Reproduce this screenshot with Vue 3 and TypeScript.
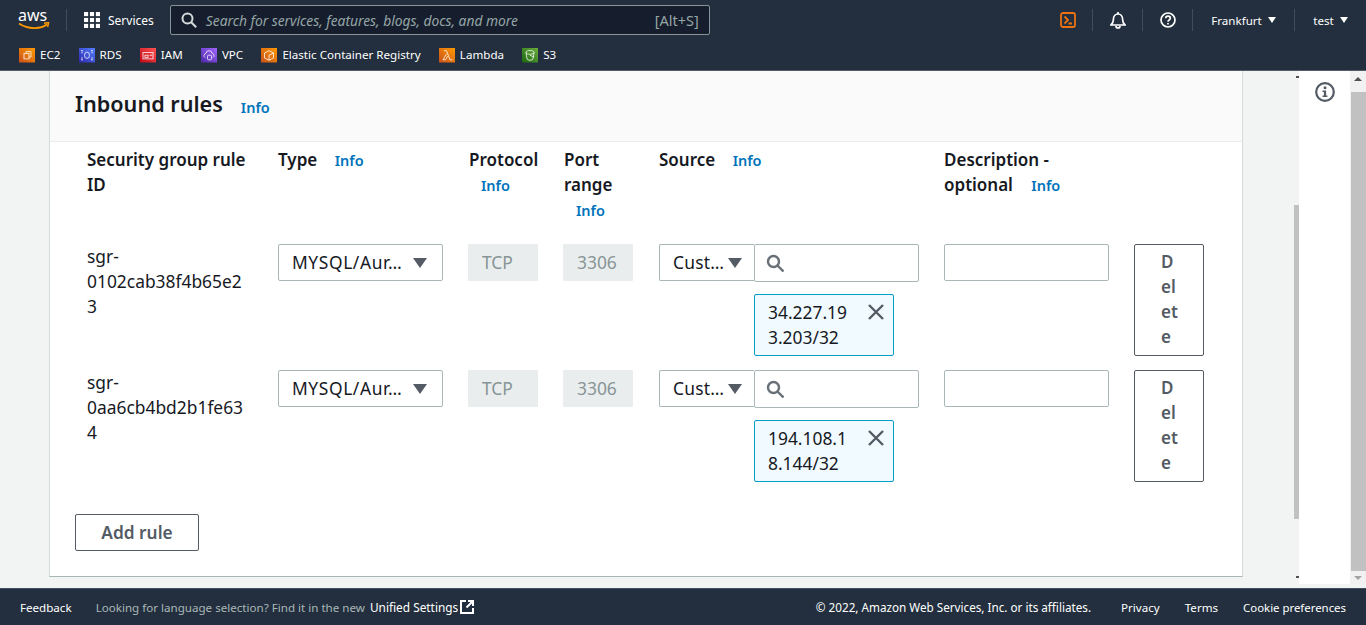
<script setup lang="ts">
interface Rule {
  id: string[]
  cidr: string[]
}

const services = [
  { name: 'EC2', from: '#c8511b', to: '#ff9900', kind: 'ec2' },
  { name: 'RDS', from: '#2e27ad', to: '#527fff', kind: 'rds' },
  { name: 'IAM', from: '#bd0816', to: '#ff5252', kind: 'iam' },
  { name: 'VPC', from: '#4d27a8', to: '#a166ff', kind: 'vpc' },
  { name: 'Elastic Container Registry', from: '#c8511b', to: '#ff9900', kind: 'ecr' },
  { name: 'Lambda', from: '#c8511b', to: '#ff9900', kind: 'lambda' },
  { name: 'S3', from: '#1b660f', to: '#6cae3e', kind: 's3' },
]

const rules: Rule[] = [
  { id: ['sgr-', '0102cab38f4b65e2', '3'], cidr: ['34.227.19', '3.203/32'] },
  { id: ['sgr-', '0aa6cb4bd2b1fe63', '4'], cidr: ['194.108.1', '8.144/32'] },
]
</script>

<template>
  <div class="page">
    <header class="nav">
      <div class="nav-top">
        <div class="logo">
          <span class="logo-text">aws</span>
          <svg viewBox="0 0 33 9" width="33" height="9">
            <path d="M1 1.500c9 6 22 6 28 .8" fill="none" stroke="#f90" stroke-width="1.800" />
            <path d="M26 1.200l4.600-.6-1 4.400" fill="none" stroke="#f90" stroke-width="1.500" />
          </svg>
        </div>
        <span class="nav-sep logo-sep"></span>
        <svg class="grid-icon" viewBox="0 0 17 17" width="16" height="16" fill="#fff">
          <rect x="0" y="0" width="4.400" height="4.400" /><rect x="6.300" y="0" width="4.400" height="4.400" /><rect x="12.600" y="0" width="4.400" height="4.400" />
          <rect x="0" y="6.300" width="4.400" height="4.400" /><rect x="6.300" y="6.300" width="4.400" height="4.400" /><rect x="12.600" y="6.300" width="4.400" height="4.400" />
          <rect x="0" y="12.600" width="4.400" height="4.400" /><rect x="6.300" y="12.600" width="4.400" height="4.400" /><rect x="12.600" y="12.600" width="4.400" height="4.400" />
        </svg>
        <span class="services-label">Services</span>
        <div class="search">
          <svg viewBox="0 0 16 16" width="16" height="16" fill="none" stroke="#d5dbdb" stroke-width="2">
            <circle cx="6.500" cy="6.500" r="5" /><path d="M10.200 10.200l5 5" />
          </svg>
          <span class="search-text">Search for services, features, blogs, docs, and more</span>
          <span class="search-key">[Alt+S]</span>
        </div>
        <div class="nav-right">
          <span class="nav-item shell">
            <svg viewBox="0 0 16 16" width="16" height="16" fill="none" stroke="#ec7211" stroke-width="1.800">
              <rect x="1" y="1" width="14" height="14" rx="2" /><path d="M4.500 4.500L8 8l-3.500 3.500M8.500 11.500h3.500" />
            </svg>
          </span>
          <span class="nav-sep"></span>
          <span class="nav-item bell">
            <svg viewBox="0 0 16 17" width="16" height="17" fill="none" stroke="#fff" stroke-width="1.700">
              <path d="M1 13h14c-1.600-1.400-2.400-3-2.400-5.500 0-3-1.900-5.500-4.600-5.500S3.400 4.500 3.400 7.500C3.400 10 2.600 11.600 1 13z" />
              <path d="M6 14a2 2 0 0 0 4 0" /><path d="M8 0v2" />
            </svg>
          </span>
          <span class="nav-sep"></span>
          <span class="nav-item help">
            <svg viewBox="0 0 16 16" width="16" height="16" fill="none" stroke="#fff" stroke-width="1.700">
              <circle cx="8" cy="8" r="7" /><path d="M5.700 6.200C5.800 4.900 6.800 4.200 8 4.200c1.300 0 2.300.8 2.300 2 0 1.900-2.300 1.700-2.300 3.500" />
              <path d="M8 11v1.500" />
            </svg>
          </span>
          <span class="nav-sep"></span>
          <span class="nav-item region">Frankfurt <i class="caret"></i></span>
          <span class="nav-sep"></span>
          <span class="nav-item user">test <i class="caret"></i></span>
        </div>
      </div>
      <div class="nav-bottom">
        <span v-for="s in services" :key="s.name" class="service">
          <svg class="service-icon" viewBox="0 0 16 16" width="16" height="14.500" preserveAspectRatio="none">
            <defs>
              <linearGradient :id="`grad-${s.kind}`" x1="0" y1="1" x2="1" y2="0">
                <stop offset="0" :stop-color="s.from" />
                <stop offset="1" :stop-color="s.to" />
              </linearGradient>
            </defs>
            <rect width="16" height="16" :fill="`url(#grad-${s.kind})`" />
            <g fill="none" stroke="#fff" stroke-width="1" opacity="0.8">
              <template v-if="s.kind === 'ec2'">
                <rect x="5" y="6" width="5" height="6" /><path d="M7 6V4h5v6h-2" />
              </template>
              <template v-else-if="s.kind === 'rds'">
                <ellipse cx="8" cy="8" rx="2.500" ry="3.500" /><path d="M3 4v2M3 10v2M13 4v2M13 10v2M2 3h2M12 3h2M2 13h2M12 13h2" />
              </template>
              <template v-else-if="s.kind === 'iam'">
                <rect x="3" y="5" width="10" height="7" /><rect x="5" y="8" width="3" height="2.500" /><path d="M9.500 8H12" />
              </template>
              <template v-else-if="s.kind === 'vpc'">
                <path d="M4 10.500a2.500 2.500 0 0 1 1-4.500 3 3 0 0 1 6 0 2.500 2.500 0 0 1 1 4.500" /><rect x="6.500" y="8" width="4" height="5" rx="1" />
              </template>
              <template v-else-if="s.kind === 'ecr'">
                <path d="M8 3l4.500 2.500v5.500L8 13.500 3.500 11V5.500zM8 8v5.500M8 8l4.500-2.500" />
              </template>
              <template v-else-if="s.kind === 'lambda'">
                <path d="M5 3h2.500l3.500 10h2.500M7.500 6.500L4 13h2.500l2.300-4" />
              </template>
              <template v-else>
                <path d="M4 5c0-3 8-3 8 0l-1 7c-.4 2-5.600 2-6 0zM4 5c0 2.500 8 2.500 8 0M8 8l4 2" />
              </template>
            </g>
          </svg>
          {{ s.name }}
        </span>
      </div>
    </header>

    <div class="body">
      <main class="main">
        <section class="card">
          <div class="card-head">
            <h2>Inbound rules</h2>
            <a class="info head-info">Info</a>
          </div>
          <div class="card-body">
            <div class="rule-grid heads">
              <div class="head">Security group rule ID</div>
              <div class="head">Type <a class="info inline">Info</a></div>
              <div class="head nudge">Protocol <a class="info block">Info</a></div>
              <div class="head nudge">Port range <a class="info block">Info</a></div>
              <div class="head">Source <a class="info inline">Info</a></div>
              <div class="head">
                <div>Description -</div>
                <div><span>optional</span> <a class="info inline wide">Info</a></div>
              </div>
              <div></div>
            </div>
            <div v-for="rule in rules" :key="rule.id[1]" class="rule-grid row">
              <div class="rule-id">
                <div v-for="line in rule.id" :key="line">{{ line }}</div>
              </div>
              <div class="select">
                <span class="select-text">MYSQL/Aur…</span>
                <i class="select-caret"></i>
              </div>
              <div class="readonly">TCP</div>
              <div class="readonly">3306</div>
              <div class="source">
                <div class="source-top">
                  <div class="select small">
                    <span class="select-text">Cust…</span>
                    <i class="select-caret"></i>
                  </div>
                  <div class="source-search">
                    <svg viewBox="0 0 18 18" width="18" height="18" fill="none" stroke="#687078" stroke-width="2.400">
                      <circle cx="7.500" cy="7.500" r="5.500" /><path d="M11.500 11.500l6 6" />
                    </svg>
                  </div>
                </div>
                <div class="token">
                  <div class="token-text">
                    <div v-for="line in rule.cidr" :key="line">{{ line }}</div>
                  </div>
                  <svg class="token-x" viewBox="0 0 16 16" width="16" height="16" stroke="#545b64" stroke-width="2.400">
                    <path d="M1 1l14 14M15 1L1 15" />
                  </svg>
                </div>
              </div>
              <div class="desc"></div>
              <button class="delete">Delete</button>
            </div>
            <button class="add-rule">Add rule</button>
          </div>
        </section>
        <div class="inner-scroll">
          <i class="tiny up"></i>
          <div class="inner-thumb"></div>
          <i class="tiny down"></i>
        </div>
      </main>
      <aside class="panel">
        <svg viewBox="0 0 20 20" width="20" height="20">
          <circle cx="10" cy="10" r="8.800" fill="none" stroke="#545b64" stroke-width="2.200" />
          <circle cx="10" cy="5.800" r="1.500" fill="#545b64" />
          <path d="M7.500 8.500h3.600v5h1.300v1.500H7.600v-1.500h1.300V10H7.500z" fill="#545b64" />
        </svg>
      </aside>
      <div class="outer-scroll">
        <i class="arrow up"></i>
        <div class="outer-thumb"></div>
        <i class="arrow down"></i>
      </div>
    </div>

    <footer class="footer">
      <span class="foot-link">Feedback</span>
      <span class="foot-muted">Looking for language selection? Find it in the new</span>
      <span class="foot-link unified">Unified Settings</span>
      <svg class="ext" viewBox="0 0 14 14" width="14" height="14" fill="none" stroke="#fff" stroke-width="2">
        <path d="M6 1H1v12h12V8" /><path d="M6.500 7.500L13 1M8 1h5v5" />
      </svg>
      <div class="foot-right">
        <span class="copy">© 2022, Amazon Web Services, Inc. or its affiliates.</span>
        <span class="foot-link">Privacy</span>
        <span class="foot-link">Terms</span>
        <span class="foot-link cookie">Cookie preferences</span>
      </div>
    </footer>
  </div>
</template>

<style>
html,
body {
  margin: 0;
  overflow: hidden;
}
</style>

<style scoped>
.page {
  display: flex;
  flex-direction: column;
  width: 1366px;
  height: 625px;
  overflow: hidden;
  font-family: "Noto Sans", "Open Sans", sans-serif;
  color: #16191f;
  background: #f2f3f3;
}

.nav {
  flex: none;
  height: 71px;
  box-sizing: border-box;
  background: #232f3e;
  color: #fff;
  border-bottom: 1px solid #545b64;
}

.nav-top {
  display: flex;
  align-items: center;
  height: 40px;
  padding-left: 18px;
}

.logo {
  display: flex;
  flex-direction: column;
  flex: none;
  width: 36px;
  margin-top: -1px;
}

.logo-text {
  font-size: 16px;
  line-height: 14px;
}

.logo svg {
  display: block;
}

.nav-sep {
  width: 1px;
  height: 22px;
  background: #414d5c;
  flex: none;
}

.logo-sep {
  margin: 0 17px 0 12px;
}

.services-label {
  margin: 0 16px 0 8px;
  font-size: 12px;
  white-space: nowrap;
}

.search {
  display: flex;
  align-items: center;
  width: 540px;
  height: 30px;
  box-sizing: border-box;
  padding: 0 10px;
  background: #161e2d;
  border: 1px solid #879596;
  border-radius: 2px;
  flex: none;
}

.search-text {
  margin-left: 9px;
  flex: 1;
  font-size: 13.800px;
  font-style: italic;
  color: #95a5a6;
  white-space: nowrap;
}

.search-key {
  font-size: 14.500px;
  color: #95a5a6;
}

.nav-right {
  display: flex;
  align-items: center;
  margin-left: auto;
  font-size: 11.600px;
}

.nav-item {
  display: flex;
  align-items: center;
  justify-content: center;
  white-space: nowrap;
}

.shell,
.bell,
.help {
  width: 49px;
}

.region {
  width: 101px;
}

.user {
  width: 71px;
}

.caret {
  display: inline-block;
  margin-left: 6px;
  border: 4px solid transparent;
  border-top: 6px solid #fff;
  border-bottom: 0;
}

.nav-bottom {
  display: flex;
  align-items: center;
  height: 29px;
  padding-left: 19px;
  gap: 18.200px;
  font-size: 11.600px;
}

.service {
  display: flex;
  align-items: center;
  gap: 5px;
  white-space: nowrap;
}

.service-icon {
  flex: none;
  margin-top: 2px;
}

.body {
  display: flex;
  flex: 1;
  min-height: 0;
  padding-bottom: 4px;
  box-sizing: border-box;
}

.main {
  position: relative;
  flex: 1;
  min-width: 0;
  padding-left: 49px;
  box-sizing: border-box;
}

.card {
  width: 1194px;
  height: 506px;
  box-sizing: border-box;
  background: #fff;
  border-left: 1px solid #d5dbdb;
  border-right: 1px solid #d5dbdb;
  border-bottom: 1px solid #aab7b8;
}

.card-head {
  display: flex;
  align-items: center;
  height: 71px;
  box-sizing: border-box;
  padding: 0 0 4px 25px;
  background: #fafafa;
  border-bottom: 1px solid #eaeded;
}

.card-head h2 {
  margin: 0 18px 0 0;
  font-size: 21.600px;
  font-weight: 600;
  line-height: 1.300;
}

.info {
  color: #0073bb;
  font-size: 14.500px;
  font-weight: 600;
}

.head-info {
  margin-top: 5px;
}

.card-body {
  padding: 5px 0 0 25px;
}

.rule-grid {
  display: grid;
  grid-template-columns: 166px 165px 70px 71px 260px 165px 70px;
  column-gap: 25px;
  padding-left: 12px;
}

.heads {
  height: 97px;
  font-size: 17px;
  line-height: 25px;
}

.head {
  font-weight: 600;
}

.head.nudge {
  padding-left: 1px;
}

.info.inline {
  margin-left: 13px;
}

.info.inline.wide {
  margin-left: 14px;
}

.info.block {
  display: block;
  margin: 1px 0 -1px 12px;
}

.row {
  height: 126px;
  align-items: start;
  font-size: 17.400px;
  line-height: 25px;
}

.select {
  display: flex;
  align-items: center;
  justify-content: space-between;
  height: 37px;
  box-sizing: border-box;
  padding: 0 15px 0 13px;
  background: #fff;
  border: 1px solid #aab7b8;
  border-radius: 2px;
}

.select-text {
  white-space: nowrap;
  letter-spacing: 0.600px;
}

.select-caret {
  border: 7px solid transparent;
  border-top: 10px solid #545b64;
  border-bottom: 0;
  flex: none;
}

.select.small {
  width: 95px;
  padding: 0 12px 0 13px;
  flex: none;
  border-radius: 2px 0 0 2px;
  border-right: 0;
}

.select.small .select-text {
  letter-spacing: 0.200px;
}

.readonly {
  display: flex;
  align-items: center;
  width: 70px;
  height: 37px;
  box-sizing: border-box;
  padding-left: 14px;
  background: #eaeded;
  color: #879596;
  border-radius: 1px;
}

.source-top {
  display: flex;
}

.source-search {
  display: flex;
  align-items: center;
  flex: 1;
  height: 38px;
  box-sizing: border-box;
  padding-left: 11px;
  border: 1px solid #aab7b8;
  border-radius: 2px;
}

.token {
  display: flex;
  justify-content: space-between;
  width: 140px;
  height: 62px;
  box-sizing: border-box;
  margin: 12px 0 0 95px;
  padding: 5px 9px 5px 13px;
  background: #f1faff;
  border: 1px solid #00a1c9;
  border-radius: 2px;
}

.token-x {
  margin-top: 4px;
}

.desc {
  height: 37px;
  box-sizing: border-box;
  border: 1px solid #aab7b8;
  border-radius: 2px;
}

.delete {
  width: 70px;
  height: 112px;
  box-sizing: border-box;
  padding: 4px 24px 6px 26px;
  background: #fff;
  border: 1px solid #545b64;
  border-radius: 2px;
  color: #545b64;
  font: 600 17px/25px "Noto Sans", sans-serif;
  word-break: break-all;
  text-align: left;
}

.add-rule {
  display: block;
  width: 124px;
  height: 37px;
  margin-top: 18px;
  background: #fff;
  border: 1px solid #545b64;
  border-radius: 2px;
  color: #545b64;
  font: 600 17.300px "Noto Sans", sans-serif;
}

.inner-scroll {
  position: absolute;
  top: 0;
  right: 0;
  bottom: 0;
  width: 5px;
}

.inner-thumb {
  margin-top: 134px;
  height: 314px;
  background: #c1c1c1;
}

.tiny {
  position: absolute;
  right: 0;
  width: 3px;
  height: 2px;
  background: #505050;
}

.tiny.up {
  top: 5px;
}

.tiny.down {
  bottom: 6px;
}

.panel {
  width: 51px;
  flex: none;
  background: #fff;
  padding-top: 11px;
  box-sizing: border-box;
  text-align: center;
}

.outer-scroll {
  position: relative;
  width: 16px;
  flex: none;
  background: #f1f1f1;
}

.outer-thumb {
  position: absolute;
  top: 21px;
  bottom: 13px;
  left: 1px;
  right: 0;
  background: #c1c1c1;
}

.arrow {
  position: absolute;
  left: 4px;
  border: 4px solid transparent;
}

.arrow.up {
  top: 6px;
  border-top: 0;
  border-bottom: 4px solid #505050;
}

.arrow.down {
  bottom: 4px;
  border-bottom: 0;
  border-top: 4px solid #a3a3a3;
}

.footer {
  display: flex;
  align-items: center;
  flex: none;
  height: 37px;
  box-sizing: border-box;
  padding: 0 20px;
  background: #232f3e;
  border-top: 1px solid #414d5c;
  font-size: 11.600px;
  color: #fff;
}

.foot-muted {
  margin: 0 5px 0 24px;
  color: #aab7b8;
}

.unified {
  font-size: 11.850px;
}

.ext {
  margin-left: 2px;
}

.foot-right {
  display: flex;
  align-items: center;
  gap: 25px;
  margin-left: auto;
}

.copy {
  margin-right: 5px;
  font-size: 11.700px;
}

.cookie {
  font-size: 11.400px;
}
</style>
